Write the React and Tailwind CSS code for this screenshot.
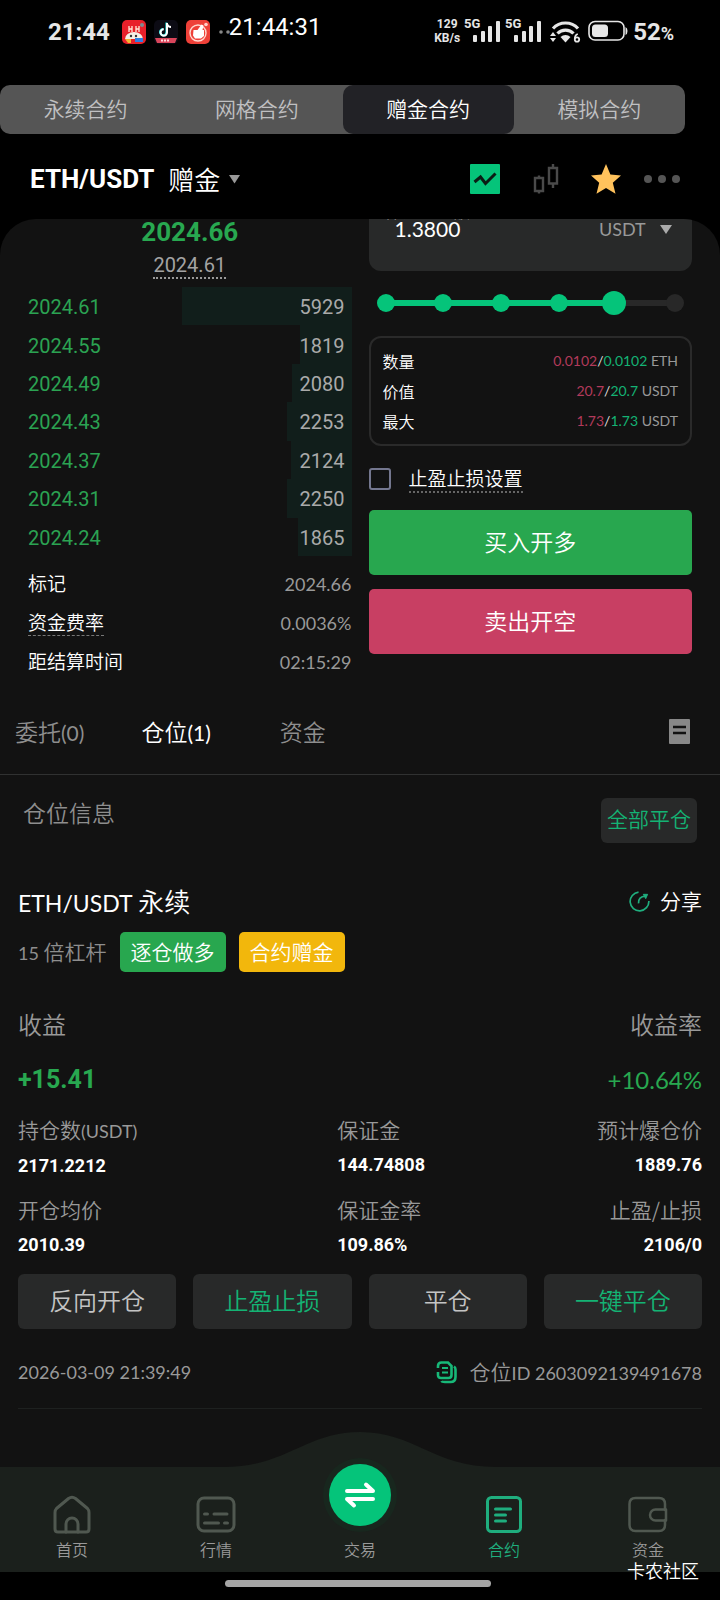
import { useState } from 'react'
import clsx from 'clsx'

const contractTabs = ['永续合约', '网格合约', '赠金合约', '模拟合约']

const bids = [
  { price: '2024.61', amount: 5929 },
  { price: '2024.55', amount: 1819 },
  { price: '2024.49', amount: 2080 },
  { price: '2024.43', amount: 2253 },
  { price: '2024.37', amount: 2124 },
  { price: '2024.31', amount: 2250 },
  { price: '2024.24', amount: 1865 },
]

const DEPTH_MAX = 11340

const limits = [
  { label: '数量', sell: '0.0102', buy: '0.0102', unit: 'ETH' },
  { label: '价值', sell: '20.7', buy: '20.7', unit: 'USDT' },
  { label: '最大', sell: '1.73', buy: '1.73', unit: 'USDT' },
]

const actions = [
  { label: '反向开仓' },
  { label: '止盈止损', accent: true },
  { label: '平仓' },
  { label: '一键平仓', accent: true },
]

function Signal() {
  return (
    <svg width="37" height="26" viewBox="0 0 37 26" fill="#e6e6e6">
      <text x="0" y="11" fontSize="13" fontWeight="700" fontFamily="Roboto, sans-serif">5G</text>
      <rect x="9" y="18" width="4" height="7" rx="1" />
      <rect x="17" y="14" width="4" height="11" rx="1" />
      <rect x="24" y="9" width="4" height="16" rx="1" />
      <rect x="32" y="4" width="4" height="21" rx="1" />
    </svg>
  )
}

function StatusBar() {
  return (
    <div className="flex h-[85px] items-start justify-between pt-[17px] pr-[46px] pl-12 font-['Roboto','Noto_Sans_CJK_SC',sans-serif] font-normal text-[#e6e6e6]">
      <div className="flex items-start">
        <span className="pt-px text-2xl leading-7 font-bold">21:44</span>
        <div className="ml-3 flex gap-2 pt-[3px]">
          {/* App notification icons */}
          <svg width="24" height="24" viewBox="0 0 24 24">
            <rect width="24" height="24" rx="5" fill="#e8202a" />
            <path d="M7 6v6M10 6v6M14 6v6M17 6v6M7 9h3M14 9h3" stroke="#ffe9d8" strokeWidth="1.3" />
            <path d="M3 19a9 7 0 0 1 18 0z" fill="#f6efe6" />
            <circle cx="9" cy="16" r="1.2" fill="#333" />
            <circle cx="14" cy="16" r="1.2" fill="#333" />
            <path d="M3 19h6v4H6z" fill="#f2b632" />
            <path d="M13 18h8v4h-8z" fill="#2f7fe0" />
            <circle cx="20" cy="5" r="2" fill="#7c8c92" />
          </svg>
          <svg width="24" height="24" viewBox="0 0 24 24">
            <rect width="24" height="24" rx="5" fill="#0c0b14" />
            <path d="M12.4 2.6v9.5a3.2 3.2 0 1 1-3.2-3.2" fill="none" stroke="#25e5e0" strokeWidth="2" />
            <path d="M13 3v9.5a3.2 3.2 0 1 1-3.2-3.2M13 4q1 3 4 3" fill="none" stroke="#fff" strokeWidth="2" />
            <path d="M1 18h22l-2 5H3z" fill="#d9455a" />
            <path d="M7 20.5h9" stroke="#ffd9dc" strokeWidth="2" strokeDasharray="2 1" />
          </svg>
          <svg width="24" height="24" viewBox="0 0 24 24">
            <rect width="24" height="24" rx="5" fill="#ee4038" />
            <circle cx="12" cy="13" r="8" fill="none" stroke="#ffd9d0" strokeWidth="1.4" />
            <path d="M7.5 10h4l4-5.5 2 1-1 4.5H18v6l-3 2.500H9l-2-3z" fill="#fff" />
            <circle cx="20" cy="4.5" r="1.8" fill="#ffd0c8" />
          </svg>
        </div>
        <svg className="mt-3 ml-2" width="12" height="6" viewBox="0 0 12 6" fill="#888">
          <circle cx="3" cy="3" r="1.8" />
          <circle cx="10" cy="3" r="1.8" />
        </svg>
        <span className="-ml-px text-2xl leading-5 text-white">21:44:31</span>
      </div>

      <div className="flex items-start">
        <div className="mr-1 text-center text-xs leading-[14px] font-bold">
          <div>129</div>
          <div>KB/s</div>
        </div>
        <div className="flex gap-1">
          <Signal />
          <Signal />
        </div>
        {/* Wi-Fi 6 */}
        <svg className="mt-[3px] ml-2" width="31" height="24" viewBox="0 0 31 24">
          <g fill="none" stroke="#e6e6e6" strokeWidth="3.2">
            <path d="M3 8.5a17 17 0 0 1 25 0" />
            <path d="M7.5 13.5a11 11 0 0 1 16 0" />
          </g>
          <path d="M10.5 17a7.5 7.5 0 0 1 10 0l-5 5.5z" fill="#e6e6e6" />
          <path d="M3 12l3 4H0zM3 22l3-4H0z" fill="#e6e6e6" />
          <circle cx="27" cy="19.5" r="2.2" fill="none" stroke="#e6e6e6" strokeWidth="1.8" />
          <path d="M24.8 19q0-4 3-5" fill="none" stroke="#e6e6e6" strokeWidth="1.8" />
        </svg>
        <svg className="mt-[3px] ml-[7px]" width="40" height="22" viewBox="0 0 40 22">
          <rect x="1" y="1.5" width="35" height="18.5" rx="6" fill="none" stroke="#e6e6e6" strokeWidth="1.6" />
          <rect x="4" y="4.5" width="16" height="12.5" rx="3.5" fill="#e6e6e6" />
          <path d="M37.5 7q2 1 2 4t-2 4z" fill="#e6e6e6" />
        </svg>
        <span className="ml-[5px] pt-px text-2xl leading-7 font-bold">
          52<span className="text-lg">%</span>
        </span>
      </div>
    </div>
  )
}

function PairHeader() {
  return (
    <header className="flex h-[85px] items-center justify-between pt-[5px] pr-[39px] pl-[30px] text-white">
      <button className="flex items-center">
        <span className="font-['Roboto'] text-[26px] leading-8 font-bold">ETH/USDT</span>
        <span className="ml-[14px] text-[26px] leading-8">赠金</span>
        <svg className="ml-2" width="13" height="10" viewBox="0 0 13 10" fill="#999">
          <path d="M1 1h11L6.5 9.5z" />
        </svg>
      </button>
      <div className="flex items-center">
        <button aria-label="走势图">
          <svg width="30" height="30" viewBox="0 0 30 30">
            <rect width="30" height="30" rx="1" fill="#05c47a" />
            <path d="M4.5 18l6-5 5 6.5 10-10" fill="none" stroke="#0b1d15" strokeWidth="3" />
          </svg>
        </button>
        <button aria-label="K线" className="ml-8">
          <svg width="28" height="30" viewBox="0 0 28 30" fill="none" stroke="#4a4a4a" strokeWidth="2.4">
            <path d="M3 14h8v13H3zM7 11.5V14M7 27v2.5M17 4h8v15.5h-8zM21 0v4M21 19.5V24" />
          </svg>
        </button>
        <button aria-label="收藏" className="ml-[31px]">
          <svg width="30" height="30" viewBox="0 0 30 30" fill="#ffc25c">
            <path d="M15 0l4.4 10.6 10.6 1-8.2 7.2 2.700 10.9L15 24l-9.5 5.7 2.7-10.9L0 11.6l10.6-1z" />
          </svg>
        </button>
        <button aria-label="更多" className="ml-[22px]">
          <svg width="38" height="10" viewBox="0 0 38 10" fill="#555">
            <circle cx="5" cy="5" r="4" />
            <circle cx="19" cy="5" r="4" />
            <circle cx="33" cy="5" r="4" />
          </svg>
        </button>
      </div>
    </header>
  )
}

function OrderBook() {
  return (
    <div className="flex-1">
      <div className="text-center font-['Roboto'] text-[26px] leading-[26px] font-bold text-[#28a850]">2024.66</div>
      <div className="mt-2 flex justify-center">
        <span className="border-b-2 border-dotted border-[#999] font-['Roboto'] text-xl leading-6 font-normal text-[#a3a3a3]">
          2024.61
        </span>
      </div>

      <div className="mt-2 grid h-[269px] auto-rows-fr">
        {bids.map((bid) => (
          <div
            key={bid.price}
            className="relative flex items-center justify-between pt-[2px] pr-[7px] font-['Roboto'] text-xl font-normal"
          >
            <div
              className="absolute inset-y-0 right-0 bg-[#111e1b]"
              style={{ width: `${(bid.amount / DEPTH_MAX) * 100}%` }}
            />
            <span className="text-[#2ba352]">{bid.price}</span>
            <span className="relative text-[#aaa]">{bid.amount}</span>
          </div>
        ))}
      </div>

      <dl className="mt-2 text-[19px] text-white">
        <div className="flex h-[39px] items-center justify-between">
          <dt>标记</dt>
          <dd className="font-['Lato'] text-lg font-normal text-[#999]">2024.66</dd>
        </div>
        <div className="flex h-[39px] items-center justify-between">
          <dt className="border-b border-dashed border-[#777] leading-[26px]">资金费率</dt>
          <dd className="font-['Lato'] text-lg font-normal text-[#999]">0.0036%</dd>
        </div>
        <div className="flex h-[39px] items-center justify-between">
          <dt>距结算时间</dt>
          <dd className="font-['Lato'] text-lg font-normal text-[#999]">02:15:29</dd>
        </div>
      </dl>
    </div>
  )
}

function OrderForm() {
  const [amount, setAmount] = useState('1.3800')
  const [percent, setPercent] = useState(79)
  const [stops, setStops] = useState(false)

  return (
    <div className="-mt-[17px] flex-1">
      {/* Scrolled partly under the header */}
      <div className="flex h-[69px] flex-col rounded-xl bg-[#282929] px-4">
        <label htmlFor="margin" className="text-[17px] leading-[18px] text-[#999]">保证金金额</label>
        <div className="-mt-[3px] flex items-center justify-between">
          <input
            id="margin"
            value={amount}
            onChange={(e) => setAmount(e.target.value)}
            className="w-28 bg-transparent pl-[10px] font-['Lato'] text-[21px] leading-6 font-normal text-white outline-none"
          />
          <div className="flex items-center">
            <select
              aria-label="单位"
              className="appearance-none bg-transparent font-['Lato'] text-lg leading-6 font-normal text-[#999]"
            >
              <option>USDT</option>
            </select>
            <svg className="mr-1 ml-[14px]" width="12" height="9" viewBox="0 0 12 9" fill="#aaa">
              <path d="M0 0h12L6 9z" />
            </svg>
          </div>
        </div>
      </div>

      <div className="relative mx-[5px] mt-5 h-6">
        <div className="absolute inset-x-3 top-[9px] h-[6px] bg-[#282828]">
          <div className="h-full bg-[#05c47a]" style={{ width: `${percent}%` }} />
        </div>
        <div className="absolute inset-x-[3px] top-[3px] flex justify-between">
          {[0, 20, 40, 60, 80, 100].map((step) => (
            <span
              key={step}
              className={clsx(
                'size-[18px] rounded-full',
                step === 80 && 'invisible',
                step <= percent ? 'bg-[#05c47a]' : 'bg-[#282828]',
              )}
            />
          ))}
        </div>
        <input
          type="range"
          aria-label="仓位比例"
          value={percent}
          onChange={(e) => setPercent(Number(e.target.value))}
          className="absolute inset-0 h-6 w-full appearance-none bg-transparent [&::-webkit-slider-thumb]:size-6 [&::-webkit-slider-thumb]:appearance-none [&::-webkit-slider-thumb]:rounded-full [&::-webkit-slider-thumb]:bg-[#05c47a]"
        />
      </div>

      <div className="mt-[21px] rounded-xl border-2 border-[#2a2a2a] px-3 py-2">
        {limits.map((row) => (
          <div key={row.label} className="flex h-[30px] items-center justify-between">
            <span className="text-base text-white">{row.label}</span>
            <span className="font-['Lato'] text-sm font-normal text-[#999]">
              <span className="text-[#b33a5b]">{row.sell}</span>
              <span className="text-[#ddd]">/</span>
              <span className="text-[#14b374]">{row.buy}</span> {row.unit}
            </span>
          </div>
        ))}
      </div>

      <label className="mt-[18px] flex h-[30px] items-center">
        <input
          type="checkbox"
          checked={stops}
          onChange={(e) => setStops(e.target.checked)}
          className="size-[22px] appearance-none rounded-[3px] border-2 border-[#74778f] checked:bg-[#05c47a]"
        />
        <span className="ml-[18px] border-b-2 border-dotted border-[#666] text-[19px] leading-[26px] text-white">
          止盈止损设置
        </span>
      </label>

      <button className="mt-4 block h-[65px] w-full rounded-[5px] bg-[#28a74f] pb-[3px] text-[23px] text-white">买入开多</button>
      <button className="mt-[14px] block h-[65px] w-full rounded-[5px] bg-[#c83f63] pb-[3px] text-[23px] text-white">
        卖出开空
      </button>
    </div>
  )
}

function PositionTabs() {
  return (
    <div className="flex h-[94px] items-center justify-between border-b border-[#303131] pt-2 pr-[30px] pl-[15px] text-[23px] text-[#8e8e8e]">
      <div className="flex items-center">
        <button>
          委托<span className="font-['Lato'] text-[21px] font-normal">(0)</span>
        </button>
        <button className="ml-[57px] text-white">
          仓位<span className="font-['Lato'] text-[21px] font-normal">(1)</span>
        </button>
        <button className="ml-[69px]">资金</button>
      </div>
      <button aria-label="历史记录">
        <svg width="21" height="25" viewBox="0 0 21 25">
          <rect width="21" height="25" rx="1" fill="#888" />
          <path d="M4 8h13M4 14h13" stroke="#121212" strokeWidth="2.5" />
        </svg>
      </button>
    </div>
  )
}

function Stat({ label, value, right }) {
  return (
    <div className={clsx(right && 'text-right')}>
      <div className="text-[21px] leading-[30px] text-[#999]">{label}</div>
      <div className="font-['Roboto'] text-lg leading-[42px] font-bold text-white">{value}</div>
    </div>
  )
}

function Position() {
  return (
    <section className="px-[18px]">
      <div className="flex justify-between pt-[23px] pr-[5px] pl-[5px]">
        <h2 className="text-[23px] leading-7 text-[#8e8e8e]">仓位信息</h2>
        <button className="h-[45px] rounded-md bg-[#282929] px-[6px] pb-[3px] text-[21px] text-[#14b374]">全部平仓</button>
      </div>

      <div className="mt-[38px] flex h-10 items-center justify-between text-white">
        <h3 className="text-[26px]">
          <span className="font-['Lato'] text-[23px] font-normal">ETH/USDT</span> 永续
        </h3>
        <button className="flex items-center gap-[10px] text-[21px]">
          <svg width="21" height="21" viewBox="0 0 22 22" fill="none" stroke="#1fae7e" strokeWidth="1.8">
            <path d="M10 1.2a9.8 9.8 0 1 0 10.800 9.3" />
            <path d="M10 13c-.5-5 2.5-7.500 7-7.500" />
            <path d="M15 3.5h4.5L17.5 8z" fill="#1fae7e" strokeWidth="1" />
          </svg>
          分享
        </button>
      </div>

      <div className="mt-[11px] flex items-center text-[21px]">
        <span className="text-[#8e8e8e]">
          <span className="font-['Lato'] text-lg font-normal">15</span> 倍杠杆
        </span>
        <span className="ml-[13px] h-10 rounded-[5px] bg-[#28a74f] px-[11px] leading-[38px] text-white">逐仓做多</span>
        <span className="ml-[13px] h-10 rounded-[5px] bg-[#f2b70c] px-[11px] leading-[38px] text-white">合约赠金</span>
      </div>

      <div className="mt-[31px] flex justify-between text-2xl leading-[42px] text-[#999]">
        <span>收益</span>
        <span>收益率</span>
      </div>
      <div className="mt-[14px] flex items-center justify-between leading-[42px] text-[#28a850]">
        <span className="font-['Roboto'] text-[25px] font-bold">+15.41</span>
        <span className="font-['Lato'] text-2xl leading-[42px] font-normal">+10.64%</span>
      </div>

      <div className="mt-[13px] grid grid-cols-[70fr_40fr_40fr] gap-y-[7px]">
        <Stat label={<>持仓数<span className="font-['Lato'] text-lg font-normal">(USDT)</span></>} value="2171.2212" />
        <Stat label="保证金" value="144.74808" />
        <Stat label="预计爆仓价" value="1889.76" right />
        <Stat label="开仓均价" value="2010.39" />
        <Stat label="保证金率" value="109.86%" />
        <Stat label="止盈/止损" value="2106/0" right />
      </div>

      <div className="mt-2 grid grid-cols-4 gap-[17px]">
        {actions.map((action) => (
          <button
            key={action.label}
            className={clsx(
              'h-[55px] rounded-md bg-[#282929] pb-[3px] text-2xl',
              action.accent ? 'text-[#14b374]' : 'text-[#c4c4c4]',
            )}
          >
            {action.label}
          </button>
        ))}
      </div>

      <div className="flex h-20 items-center justify-between border-b border-[#1e2120] pt-[7px] text-[#999]">
        <time className="font-['Lato'] text-lg font-normal">2026-03-09 21:39:49</time>
        <button className="flex items-center text-[21px]">
          <svg width="22" height="23" viewBox="0 0 22 23" fill="none" stroke="#17b878" strokeWidth="2.6">
            <path d="M2 7V5q0-3.5 3.500-3.5H12L15.5 5v9q0 3-3 3H5q-3 0-3-3v-3" />
            <path d="M6 7h6M6 11.5h6" strokeWidth="2.2" />
            <path d="M18 5.5q1.5 1 1.5 3V16q0 5-5 5H9q-3 0-3.5-1" />
          </svg>
          <span className="ml-3">
            仓位<span className="font-['Lato'] text-lg font-normal">ID 2603092139491678</span>
          </span>
        </button>
      </div>
    </section>
  )
}

function NavItem({ label, active, children }) {
  return (
    <a href="#" className={clsx('flex flex-col items-center pt-7', active ? 'text-[#1fae7e]' : 'text-[#999]')}>
      <svg
        width="40"
        height="40"
        viewBox="0 0 40 40"
        fill="none"
        stroke={active ? '#1fae7e' : '#505850'}
        strokeWidth="3"
        strokeLinecap="round"
        strokeLinejoin="round"
      >
        {children}
      </svg>
      <span className="mt-1 text-base leading-5">{label}</span>
    </a>
  )
}

function BottomNav() {
  return (
    <nav className="relative mt-[58px] grid h-[105px] grid-cols-5 bg-[#1b201c]">
      {/* Raised hump behind the trade button */}
      <svg className="absolute bottom-full left-1/2 -translate-x-1/2" width="272" height="36" viewBox="0 0 272 36" fill="#1b201c">
        <path d="M0 36C62 36 82 1 136 1s74 35 136 35z" />
      </svg>
      <NavItem label="首页">
        <path d="M3 17.5Q3 15 4.500 13.500L16.500 3.500Q20 1 23.500 3.500L35.500 13.500Q37 15 37 17.500V34q0 3-3 3H6q-3 0-3-3z" />
        <path d="M14 37V29a6 6 0 0 1 12 0v8" />
      </NavItem>
      <NavItem label="行情">
        <rect x="2" y="3" width="36" height="33" rx="6" />
        <path d="M8.500 19h3M18 19h13M8.500 28h14M28.500 28h3" />
      </NavItem>
      <a href="#" className="relative flex flex-col items-center text-[#999]">
        <span className="-mt-[9px] flex size-[74px] items-center justify-center rounded-full bg-[#18271e]">
          <span className="flex size-[62px] items-center justify-center rounded-full bg-[#05c47a]">
            <svg width="32" height="28" viewBox="0 0 32 28" fill="none" stroke="#fff" strokeWidth="4" strokeLinecap="round" strokeLinejoin="round">
              <path d="M3 10h26L22 3.500M29 18H3l7 6.500" />
            </svg>
          </span>
        </span>
        <span className="mt-[7px] text-base leading-5">交易</span>
      </a>
      <NavItem label="合约" active>
        <rect x="3.5" y="2.5" width="33" height="34" rx="4" />
        <path d="M11.500 14h15M11.500 20h10M11.500 26h10" />
      </NavItem>
      <NavItem label="资金">
        <path d="M37 15V9q0-6-6-6H7.500q-6 0-6 6v21q0 6 6 6H31q6 0 6-6v-5" strokeWidth="2.5" />
        <path d="M38 14.500H27.500a5.500 5.500 0 0 0 0 11H38z" strokeWidth="2.5" />
      </NavItem>
    </nav>
  )
}

function App() {
  const [tab, setTab] = useState('赠金合约')

  return (
    <div className="min-h-screen bg-black font-['Noto_Sans_CJK_SC',sans-serif] font-[350]">
      <StatusBar />

      {/* Contract type switch */}
      <div className="mr-[35px] grid h-[49px] grid-cols-4 overflow-hidden rounded-[10px] bg-[#555]">
        {contractTabs.map((name) => (
          <button
            key={name}
            onClick={() => setTab(name)}
            className={clsx('rounded-[10px] pb-[2px] text-[21px]', tab === name ? 'bg-[#222226] text-white' : 'text-[#c0c0c2]')}
          >
            {name}
          </button>
        ))}
      </div>

      <PairHeader />

      <main className="overflow-hidden rounded-t-[36px] bg-[#121212]">
        <div className="flex gap-[17px] pr-7 pl-7">
          <OrderBook />
          <OrderForm />
        </div>
        <PositionTabs />
        <Position />
        <BottomNav />
      </main>

      {/* Gesture bar */}
      <footer className="relative flex h-7 justify-center pt-2 pr-1">
        <span className="h-[7px] w-[266px] rounded-full bg-[#a5a5a5]" />
        <span className="absolute -top-3 right-[21px] text-lg leading-5 text-white">卡农社区</span>
      </footer>
    </div>
  )
}

export default App
